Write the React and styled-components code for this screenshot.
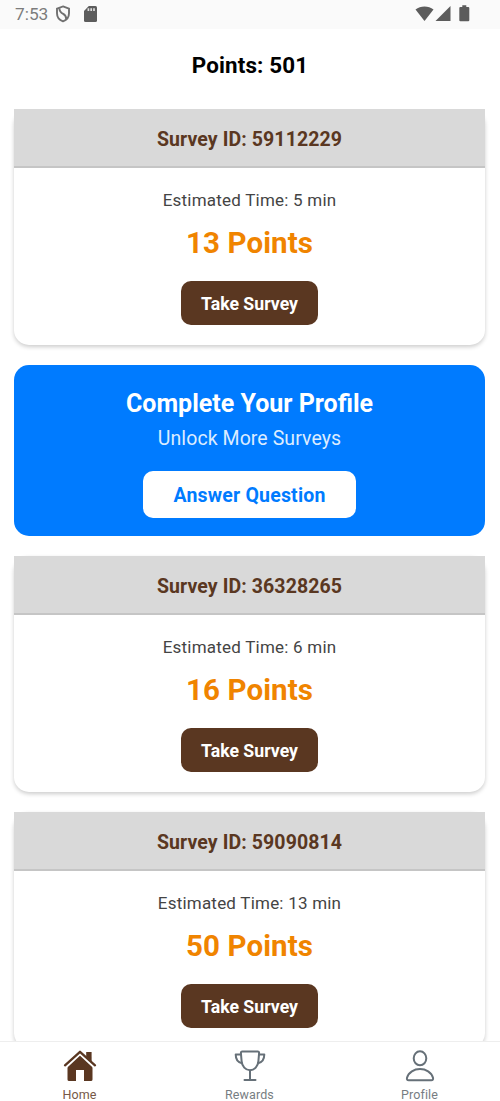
import React from 'react';
import styled, { createGlobalStyle } from 'styled-components';

const feed = [
  { type: 'survey', id: '59112229', minutes: 5, points: 13 },
  { type: 'profile', id: 'profile' },
  { type: 'survey', id: '36328265', minutes: 6, points: 16 },
  { type: 'survey', id: '59090814', minutes: 13, points: 50 },
];

function ShieldIcon() {
  return (
    <svg width="16" height="18" viewBox="0 0 16 18" fill="none" stroke="#707070" strokeWidth="1.9">
      <path d="M8 1.4 14 3.7v4.6c0 3.8-2.5 6.8-6 8-3.5-1.2-6-4.2-6-8V3.7Z" />
      <path d="M4.4 3.2c0 3 1.2 4.3 3.8 5.7 2.3 1.2 3 2.6 3 5.2" />
    </svg>
  );
}

function SdCardIcon() {
  return (
    <svg width="13" height="16" viewBox="0 0 13 16" fill="#5c5c5c">
      <path d="M4.8 0H11.5Q13 0 13 1.5V14.5Q13 16 11.5 16H1.5Q0 16 0 14.5V5Z" />
      <path d="M4.4 2.2v2.7M7.2 2.2v2.7M10 2.2v2.7" stroke="#ddd" strokeWidth="1.7" />
    </svg>
  );
}

function SignalIcons() {
  return (
    <svg width="56" height="18" viewBox="0 0 56 18" fill="#5c5c5c">
      <path d="M0.5 4.6C5.5 0.6 13.5 0.6 18.5 4.6L9.5 16Z" />
      <path d="M20.5 16 35.5 1V16Z" />
      <path d="M47.3 0.3h4V2h1.9q1.1 0 1.1 1.1V15.2q0 1.1-1.1 1.1h-7.8q-1.1 0-1.1-1.1V3.1Q44.3 2 45.4 2h1.9Z" />
    </svg>
  );
}

function HomeIcon() {
  return (
    <svg width="34" height="34" viewBox="0 0 34 34">
      <path
        d="M4.5 17 17 5.8 29.5 17v13.4q0 1.6-1.6 1.6h-6.9V21h-8v11H6.1q-1.6 0-1.6-1.6Z"
        fill="#5a3721"
      />
      <path d="m2 17.5 15-13.8 15 13.8" fill="none" stroke="#fff" strokeWidth="4.5" />
      <path d="M23.2 2.9h5.4v9.6l-5.4-4.6Z" fill="#5a3721" />
      <path
        d="m2 16.3 15-13.5 15 13.5"
        fill="none"
        stroke="#5a3721"
        strokeWidth="2.3"
        strokeLinecap="round"
        strokeLinejoin="round"
      />
    </svg>
  );
}

function TrophyIcon() {
  return (
    <svg
      width="34"
      height="34"
      viewBox="0 0 34 34"
      fill="none"
      stroke="#667078"
      strokeWidth="2"
      strokeLinecap="round"
      strokeLinejoin="round"
    >
      <path d="M9.3 2.6h15.4q1.5 0 1.4 1.5L25.4 12C25 17.5 21.5 21.2 17 21.2S9 17.5 8.6 12L7.9 4.1Q7.8 2.6 9.3 2.6Z" />
      <path d="M8 5.6H2.7c0 4.8 2 7.8 6.2 8.6M26 5.6h5.3c0 4.8-2 7.8-6.2 8.6M17 21.5V31M11.5 31h11" />
    </svg>
  );
}

function PersonIcon() {
  return (
    <svg
      width="34"
      height="34"
      viewBox="0 0 34 34"
      fill="none"
      stroke="#667078"
      strokeWidth="2"
      strokeLinejoin="round"
    >
      <ellipse cx="17" cy="9.3" rx="6.3" ry="7" />
      <path d="M17 20.1c-5.8 0-11.5 3-13 8.7-.4 1.6.3 2.5 1.7 2.5h22.6c1.4 0 2.1-.9 1.7-2.5-1.5-5.7-7.2-8.7-13-8.7Z" />
    </svg>
  );
}

function SurveyCard({ survey }) {
  return (
    <Card>
      <CardHeader>Survey ID: {survey.id}</CardHeader>
      <CardBody>
        <EstimatedTime>Estimated Time: {survey.minutes} min</EstimatedTime>
        <Reward>{survey.points} Points</Reward>
        <SurveyButton>Take Survey</SurveyButton>
      </CardBody>
    </Card>
  );
}

function ProfileBanner() {
  return (
    <Banner>
      <BannerTitle>Complete Your Profile</BannerTitle>
      <BannerText>Unlock More Surveys</BannerText>
      <AnswerButton>Answer Question</AnswerButton>
    </Banner>
  );
}

function App() {
  return (
    <Screen>
      <GlobalStyle />
      <StatusBar>
        <StatusGroup>
          <Clock>7:53</Clock>
          <ShieldIcon />
          <SdCardIcon />
        </StatusGroup>
        <SignalIcons />
      </StatusBar>
      <Balance>Points: 501</Balance>
      <Feed>
        {feed.map((item) =>
          item.type === 'survey' ? (
            <SurveyCard key={item.id} survey={item} />
          ) : (
            <ProfileBanner key={item.id} />
          )
        )}
      </Feed>
      <TabBar>
        <Tab $active>
          <HomeIcon />
          <TabLabel>Home</TabLabel>
        </Tab>
        <Tab>
          <TrophyIcon />
          <TabLabel>Rewards</TabLabel>
        </Tab>
        <Tab>
          <PersonIcon />
          <TabLabel>Profile</TabLabel>
        </Tab>
      </TabBar>
    </Screen>
  );
}

const GlobalStyle = createGlobalStyle`
  * {
    box-sizing: border-box;
  }

  body {
    margin: 0;
    background: #fff;
    font-family: Roboto, sans-serif;
  }

  button {
    border: none;
    padding: 0;
    font-family: inherit;
  }
`;

const Screen = styled.div`
  display: flex;
  flex-direction: column;
  height: 1101px;
  overflow: hidden;
`;

const StatusBar = styled.header`
  display: flex;
  flex: none;
  align-items: center;
  justify-content: space-between;
  height: 29px;
  padding: 0 29px 1px 15px;
  background: #fafafa;
`;

const StatusGroup = styled.div`
  display: flex;
  align-items: center;

  svg + svg {
    margin-left: 13px;
  }
`;

const Clock = styled.span`
  width: 40px;
  color: #7c7c7c;
  font-size: 17.3px;
  line-height: 20px;
`;

const Balance = styled.h1`
  flex: none;
  height: 80px;
  margin: 0;
  padding-top: 22px;
  color: #000;
  font-size: 22.4px;
  font-weight: 700;
  line-height: 28px;
  letter-spacing: 0.15px;
  text-align: center;
`;

const Feed = styled.main`
  display: flex;
  flex: 1;
  flex-direction: column;
  gap: 20px;
  min-height: 0;
  padding: 0 15px 0 14px;
  overflow: hidden;
`;

const Card = styled.section`
  flex: none;
  height: 236px;
  border-radius: 15px;
  background: #fff;
  box-shadow: 0 2px 4px rgba(0, 0, 0, 0.2);
`;

const CardHeader = styled.h2`
  height: 59px;
  margin: 0;
  border-bottom: 2px solid #c5c5c5;
  background: #d9d9d9;
  color: #5a3721;
  font-size: 19.5px;
  font-weight: 700;
  line-height: 61px;
  letter-spacing: 0.1px;
  text-align: center;
`;

const CardBody = styled.div`
  display: flex;
  flex-direction: column;
  align-items: center;
  padding-top: 22px;
`;

const EstimatedTime = styled.p`
  margin: 0;
  color: #444;
  font-size: 17px;
  line-height: 20px;
  letter-spacing: 0.22px;
`;

const Reward = styled.p`
  margin: 15px 0 20px;
  color: #f08400;
  font-size: 29.5px;
  font-weight: 700;
  line-height: 36px;
  letter-spacing: 0.1px;
`;

const SurveyButton = styled.button`
  width: 137px;
  height: 44px;
  padding-top: 1px;
  border-radius: 10px;
  background: #5a3721;
  color: #fff;
  font-size: 17.7px;
  font-weight: 700;
`;

const Banner = styled.section`
  display: flex;
  flex: none;
  flex-direction: column;
  align-items: center;
  height: 171px;
  padding-top: 23px;
  border-radius: 15px;
  background: #007bff;
`;

const BannerTitle = styled.h2`
  margin: 0;
  color: #fff;
  font-size: 25px;
  font-weight: 700;
  line-height: 32px;
`;

const BannerText = styled.p`
  margin: 6px 0 19px;
  color: #dcecff;
  font-size: 19.5px;
  line-height: 26px;
  letter-spacing: 0.08px;
`;

const AnswerButton = styled.button`
  width: 213px;
  height: 47px;
  padding-top: 1px;
  border-radius: 10px;
  background: #fff;
  color: #007bff;
  font-size: 19.5px;
  font-weight: 700;
  letter-spacing: 0.2px;
`;

const TabBar = styled.nav`
  display: flex;
  flex: none;
  justify-content: center;
  height: 60px;
  padding-right: 1px;
  border-top: 1px solid #eee;
  background: #fff;
`;

const Tab = styled.a`
  display: flex;
  flex: none;
  flex-direction: column;
  align-items: center;
  width: 170px;
  padding-top: 7px;
  color: ${(props) => (props.$active ? '#765847' : '#777d82')};

  svg {
    flex: none;
  }
`;

const TabLabel = styled.span`
  margin-top: 5px;
  font-size: 12.5px;
  line-height: 14px;
  letter-spacing: 0.1px;
`;

export default App;
